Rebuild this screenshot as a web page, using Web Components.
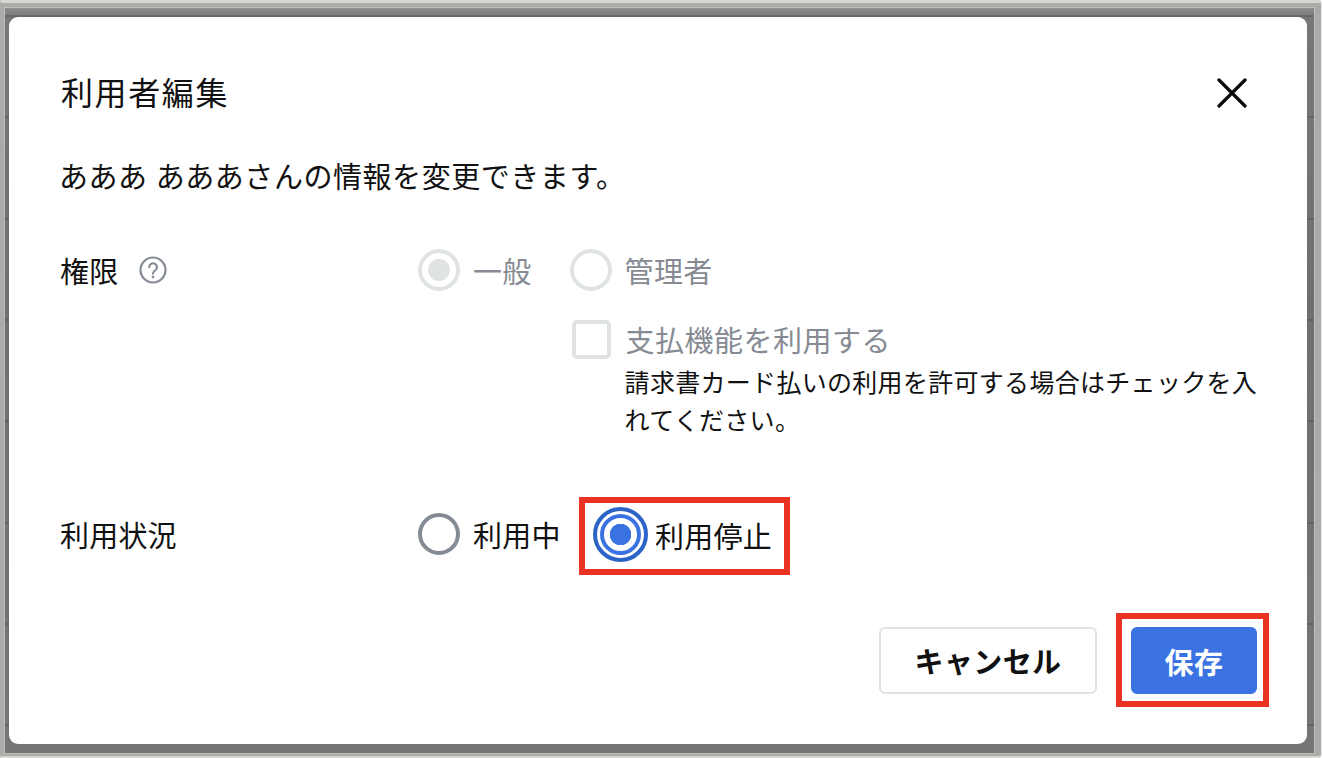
<!DOCTYPE html>
<html lang="ja"><head><meta charset="utf-8"><style>
html,body{margin:0;height:100%;overflow:hidden;background:#fff}
body{font-family:"Noto Sans CJK JP","Noto Sans",sans-serif;}
</style></head><body>
<x-frame>
<x-dialog heading="利用者編集">
  <x-text slot="lead">あああ あああさんの情報を変更できます。</x-text>
  <x-row slot="rows">
    <x-label help>権限</x-label>
    <div style="display:grid;grid-template-columns:auto auto;justify-content:start;column-gap:38px">
      <x-radio disabled checked>一般</x-radio>
      <x-radio disabled>管理者</x-radio>
      <span></span>
      <x-check disabled hint="請求書カード払いの利用を許可する場合はチェックを入れてください。">支払機能を利用する</x-check>
    </div>
  </x-row>
  <x-row slot="rows" status>
    <x-label style="margin-top:15px">利用状況</x-label>
    <div style="display:flex;align-items:flex-start;gap:18px">
      <x-radio style="margin-top:15px">利用中</x-radio>
      <x-mark pad="status"><x-radio focus>利用停止</x-radio></x-mark>
    </div>
  </x-row>
  <x-button slot="actions">キャンセル</x-button>
  <x-mark slot="actions" pad="btn"><x-button primary>保存</x-button></x-mark>
</x-dialog>
</x-frame>
<script>
function def(name, css, html){
  customElements.define(name, class extends HTMLElement{
    connectedCallback(){
      if(this.shadowRoot) return;
      const r=this.attachShadow({mode:'open'});
      r.innerHTML='<style>'+css+'</style>'+(typeof html==='function'?html(this):html);
    }
  });
}
def('x-frame',`
 :host{display:block;box-sizing:border-box;height:758px;padding:5px 7px 3px 4px;background:#ababa9;border-style:solid;border-color:#d6d6d2 #e4e4e2 #d6d6d2 #ababa9;border-width:3px 1px 2px 1px;border-radius:0 3px 4px 0}
 .b{box-sizing:border-box;height:745px;padding:9px 7px 8px 4px;background:
   repeating-linear-gradient(to bottom,transparent 0 7px,rgba(0,0,0,.14) 7px 9px,transparent 9px 101.3px),
   linear-gradient(#8e8e8e,#777 9px,#6f6f6f 40%,#757575);box-shadow:0 0 0 1px #bdbdba}
`,`<div class="b"><slot></slot></div>`);
def('x-dialog',`
 :host{display:block;box-sizing:border-box;height:727px;background:#fff;border-radius:9px;padding:0 38px 0 52px;color:#111}
 header{display:flex;justify-content:space-between;box-sizing:border-box;height:152px;align-items:flex-start;padding-top:48px}
 h2{margin:0;font-weight:400;font-size:32px;letter-spacing:1.6px;line-height:52px}
 svg{display:block;margin:13px 22px 0 0}
 .lead{height:95px;margin-top:-16px}
 .acts{display:flex;justify-content:flex-end;align-items:center;gap:19px;margin-top:38px}
`,h=>`<header><h2>${h.getAttribute('heading')}</h2>
 <svg width="30" height="30" viewBox="0 0 30 30" fill="none" stroke="#0a0a0a" stroke-width="3.2" stroke-linecap="round"><path d="M2 2L28 28M28 2L2 28"/></svg></header>
 <div class="lead"><slot name="lead"></slot></div><slot name="rows"></slot><div class="acts"><slot name="actions"></slot></div>`);
def('x-text',`:host{display:block;font-size:29px;letter-spacing:.55px;word-spacing:1px;line-height:44px;margin:-1px 0 0 -2px}`,`<slot></slot>`);
def('x-row',`:host{display:grid;grid-template-columns:357px 1fr;align-items:start}
 :host([status]){margin-top:59px}`,`<slot></slot>`);
def('x-label',`:host{display:flex;align-items:center;gap:21px;height:44px;font-size:29px;letter-spacing:.2px;color:#111;margin-left:-1px}
 svg{display:block}`,h=>`<slot></slot>`+(h.hasAttribute('help')?`<svg width="28" height="28" viewBox="0 0 28 28" fill="none"><circle cx="14" cy="14" r="12.5" stroke="#858b95" stroke-width="2.2"/><path d="M10.2 11.2a3.9 3.9 0 1 1 6.1 3.2c-1.4 1-2.3 1.6-2.3 3.2" stroke="#858b95" stroke-width="2.1" fill="none" stroke-linecap="round"/><circle cx="14" cy="21" r="1.4" fill="#858b95"/></svg>`:''));
def('x-radio',`
 :host{display:inline-flex;align-items:center;gap:13px;height:44px;font-size:29px;letter-spacing:.3px;color:#111;white-space:nowrap}
 :host([disabled]){color:#868b93}
 .o{box-sizing:border-box;width:42px;height:42px;border-radius:50%;border:4px solid #858b95;display:flex;align-items:center;justify-content:center}
 :host([disabled]) .o{border-color:#dfe3e3}
 :host([checked]) .o::after{content:"";width:22px;height:22px;border-radius:50%;background:#dfe3e3}
 :host([focus]){gap:7px;height:55px}
 :host([focus]) .o{width:55px;height:55px;border:4px solid #2b64c6;padding:3px}
 :host([focus]) .o::after{content:"";box-sizing:border-box;width:100%;height:100%;border-radius:50%;border:4px solid #3a73e1;background:radial-gradient(circle,#3a73e1 0 10.5px,#fff 11px)}
`,`<span class="o"></span><span><slot></slot></span>`);
def('x-check',`
 :host{display:grid;grid-template-columns:39px 1fr;column-gap:14px;font-size:29px;letter-spacing:.5px;color:#868b93;width:690px;margin-top:25px;margin-left:2px}
 .b{box-sizing:border-box;width:39px;height:39px;border:4px solid #dfe3e3;border-radius:5px;align-self:center;margin-top:1px}
 .t{line-height:44px;height:44px;white-space:nowrap;margin-left:1px}
 .h{grid-column:2;font-size:25px;letter-spacing:.3px;line-height:38px;color:#111;margin-top:1px}
`,h=>`<span class="b"></span><span class="t"><slot></slot></span><div class="h">${h.getAttribute('hint')}</div>`);
def('x-mark',`
 :host{display:inline-flex;box-sizing:border-box;border:6px solid #ea3323;align-items:flex-start}
 :host([pad=status]){height:78px;padding:4px 12px 0 8px}
 :host([pad=btn]){padding:8px 6px 7px 9px}
`,`<slot></slot>`);
def('x-button',`
 :host{display:inline-flex;box-sizing:border-box;height:67px;width:218px;align-items:center;justify-content:center;border:2px solid #dfe3e3;border-radius:6px;background:#fff;color:#111;font-size:29px;font-weight:700;letter-spacing:.4px}
 :host([primary]){width:126px;background:#3a73e1;border-color:#3a73e1;color:#fff}
`,`<slot></slot>`);
</script></body></html>
